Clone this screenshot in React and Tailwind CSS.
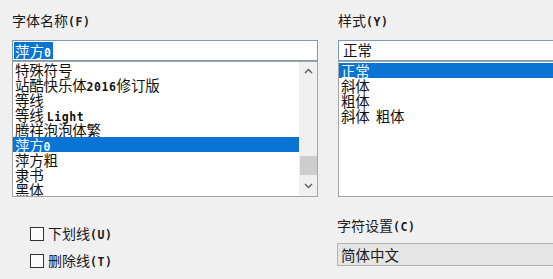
import React from "react";

const CJK = { fontFamily: '"Noto Sans CJK SC", "Noto Sans", sans-serif' };

function Mono({ children }) {
  return (
    <span
      className="font-bold text-[11.5px] tracking-[0.6px]"
      style={{ fontFamily: '"DejaVu Sans Mono", monospace' }}
    >
      {children}
    </span>
  );
}

function Label({ cjk, hot }) {
  return (
    <div className="h-[18px] leading-[18px] text-[14px] text-[#1a1a1a] whitespace-nowrap">
      {cjk}
      <Mono>({hot})</Mono>
    </div>
  );
}

const fonts = [
  ["特殊符号"],
  ["站酷快乐体", "2016", "修订版"],
  ["等线"],
  ["等线 ", "Light"],
  ["腾祥泡泡体繁"],
  ["萍方", "0", "", true],
  ["萍方粗"],
  ["隶书"],
  ["黑体"],
];

function Row({ parts, selected }) {
  const [a, b, c] = parts;
  return (
    <div
      className={
        "h-[15px] leading-[15px] pl-[2px] text-[14.5px] whitespace-nowrap tracking-[-0.2px] " +
        (selected ? "bg-[#0a74d4] text-[#eaf6ff]" : "text-[#111]")
      }
    >
      {a}
      {b && <Mono>{b}</Mono>}
      {c}
    </div>
  );
}

function Checkbox({ cjk, hot }) {
  return (
    <div className="flex items-center h-[14px] gap-[4px]">
      <div className="w-[14px] h-[14px] border border-[#333] bg-[#fbfbfb]" />
      <div className="text-[14px] leading-[16px] text-[#1a1a1a] whitespace-nowrap">
        {cjk}
        <Mono>({hot})</Mono>
      </div>
    </div>
  );
}

export default function App() {
  return (
    <div
      className="w-[553px] h-[279px] overflow-hidden bg-[#f0f0f0] relative"
      style={CJK}
    >
      <div className="flex pl-[12px] pt-[11px]">
        {/* Left: font name */}
        <div className="w-[306px] shrink-0 flex flex-col">
          <Label cjk="字体名称" hot="F" />
          <div className="mt-[11px] h-[21px] border border-[#7b9ab9] bg-white flex items-stretch p-[1px]">
            <div className="bg-[#0a74d4] text-white text-[14.5px] leading-[17px] px-[1px] whitespace-nowrap">
              萍方<Mono>0</Mono>
            </div>
          </div>
          <div className="h-[136px] border border-[#a3a3a3] bg-white flex overflow-hidden">
            <div className="flex-1 flex flex-col overflow-hidden">
              {fonts.map((f, i) => (
                <Row key={i} parts={f} selected={f[3]} />
              ))}
            </div>
            <div className="w-[18px] bg-[#f0f0f0] flex flex-col items-center">
              <div className="h-[17px] w-full flex items-center justify-center">
                <svg width="9" height="6" viewBox="0 0 9 6">
                  <polyline points="1,5 4.5,1.5 8,5" fill="none" stroke="#606060" strokeWidth="1.5" />
                </svg>
              </div>
              <div className="flex-1" />
              <div className="w-[17px] h-[19px] bg-[#cdcdcd]" />
              <div className="h-[21px] w-full flex items-center justify-center">
                <svg width="9" height="6" viewBox="0 0 9 6">
                  <polyline points="1,1 4.5,4.5 8,1" fill="none" stroke="#606060" strokeWidth="1.5" />
                </svg>
              </div>
            </div>
          </div>
        </div>

        {/* Right: style */}
        <div className="ml-[20px] w-[240px] shrink-0 flex flex-col">
          <Label cjk="样式" hot="Y" />
          <div className="mt-[11px] h-[21px] border border-[#7b9ab9] bg-white pl-[4px] text-[14.5px] leading-[18px] text-[#111]">
            正常
          </div>
          <div className="h-[136px] border border-[#a3a3a3] bg-white flex flex-col pt-[1px] overflow-hidden">
            <Row parts={["正常"]} selected />
            <Row parts={["斜体"]} />
            <Row parts={["粗体"]} />
            <Row parts={["斜体\u00a0\u00a0粗体"]} />
          </div>
        </div>
      </div>

      {/* Bottom */}
      <div className="flex mt-[19px]">
        <div className="w-[337px] shrink-0 pl-[30px] pt-[11px] flex flex-col gap-[13px]">
          <Checkbox cjk="下划线" hot="U" />
          <Checkbox cjk="删除线" hot="T" />
        </div>
        <div className="w-[240px] shrink-0 flex flex-col">
          <Label cjk="字符设置" hot="C" />
          <div className="mt-[9px] h-[23px] border border-[#b3b3b3] bg-[#e5e5e5] pl-[3px] text-[14.5px] leading-[21px] text-[#1a1a1a]">
            简体中文
          </div>
        </div>
      </div>
    </div>
  );
}
